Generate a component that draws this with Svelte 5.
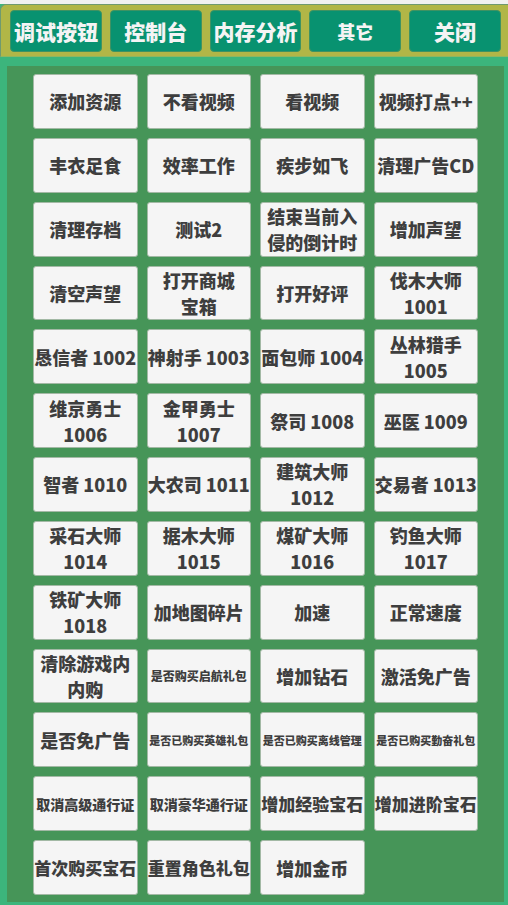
<script>
  let activeTab = '调试按钮';

  const tabs = [
    { label: '调试按钮' },
    { label: '控制台' },
    { label: '内存分析' },
    { label: '其它', size: 'small' },
    { label: '关闭' }
  ];

  const commands = [
    { label: '添加资源' },
    { label: '不看视频' },
    { label: '看视频' },
    { label: '视频打点++' },
    { label: '丰衣足食' },
    { label: '效率工作' },
    { label: '疾步如飞' },
    { label: '清理广告CD' },
    { label: '清理存档' },
    { label: '测试2' },
    { label: '结束当前入\n侵的倒计时' },
    { label: '增加声望' },
    { label: '清空声望' },
    { label: '打开商城\n宝箱' },
    { label: '打开好评' },
    { label: '伐木大师\n1001' },
    { label: '恳信者 1002' },
    { label: '神射手 1003' },
    { label: '面包师 1004' },
    { label: '丛林猎手\n1005' },
    { label: '维京勇士\n1006' },
    { label: '金甲勇士\n1007' },
    { label: '祭司 1008' },
    { label: '巫医 1009' },
    { label: '智者 1010' },
    { label: '大农司 1011' },
    { label: '建筑大师\n1012' },
    { label: '交易者 1013' },
    { label: '采石大师\n1014' },
    { label: '据木大师\n1015' },
    { label: '煤矿大师\n1016' },
    { label: '钓鱼大师\n1017' },
    { label: '铁矿大师\n1018' },
    { label: '加地图碎片' },
    { label: '加速' },
    { label: '正常速度' },
    { label: '清除游戏内\n内购' },
    { label: '是否购买启航礼包', size: 'small' },
    { label: '增加钻石' },
    { label: '激活免广告' },
    { label: '是否免广告' },
    { label: '是否已购买英雄礼包', size: 'tiny' },
    { label: '是否已购买离线管理', size: 'tiny' },
    { label: '是否已购买勤奋礼包', size: 'tiny' },
    { label: '取消高级通行证', size: 'medium' },
    { label: '取消豪华通行证', size: 'medium' },
    { label: '增加经验宝石', size: 'large' },
    { label: '增加进阶宝石', size: 'large' },
    { label: '首次购买宝石', size: 'large' },
    { label: '重置角色礼包', size: 'large' },
    { label: '增加金币' }
  ];
</script>

<div class="page">
  <nav class="tabs">
    {#each tabs as tab}
      <button
        type="button"
        class="tab {tab.size || ''}"
        on:click={() => (activeTab = tab.label)}
      >
        {tab.label}
      </button>
    {/each}
  </nav>

  <main class="panel">
    {#each commands as command}
      <button type="button" class="command {command.size || ''}">{command.label}</button>
    {/each}
  </main>
</div>

<style>
  :global(body) {
    margin: 0;
    background: #3cb57c;
  }

  .page {
    display: flex;
    flex-direction: column;
    min-height: 100vh;
    box-sizing: border-box;
    padding-bottom: 3px;
    border-top: 4px solid #f1f1f1;
    font-family: 'Noto Sans CJK SC', sans-serif;
  }

  button {
    box-sizing: border-box;
    min-width: 0;
    padding: 0;
    font-family: inherit;
    font-weight: 900;
    white-space: pre;
    cursor: pointer;
  }

  .tabs {
    display: grid;
    grid-template-columns: repeat(5, 1fr);
    gap: 8px;
    padding: 5px 7px 4px 9px;
    background: #b1b647;
    border: 1px solid #6f9a70;
    border-right: none;
    border-bottom-color: #8fb661;
    border-radius: 6px 0 0 0;
  }

  .tab {
    display: flex;
    align-items: center;
    justify-content: center;
    height: 42px;
    border: 1px solid #3f9263;
    border-radius: 4px;
    background: #089270;
    color: #f4f4f4;
    font-size: 21px;
    line-height: 26px;
  }

  .tab.small {
    font-size: 18px;
  }

  .panel {
    flex: 1;
    display: grid;
    grid-template-columns: repeat(4, 1fr);
    grid-auto-rows: minmax(54px, 1fr);
    gap: 9px;
    margin: 9px 4px 0 7px;
    padding: 8px 26px 7px;
    background: #469558;
  }

  .command {
    display: flex;
    align-items: center;
    justify-content: center;
    border: 1px solid #a3b9a5;
    border-radius: 3px;
    background: #f5f5f5;
    color: #3e3e3e;
    font-size: 18px;
    line-height: 26px;
    text-align: center;
  }

  .command.large {
    font-size: 17px;
  }

  .command.medium {
    font-size: 14px;
  }

  .command.small {
    font-size: 12px;
  }

  .command.tiny {
    font-size: 11px;
  }
</style>
